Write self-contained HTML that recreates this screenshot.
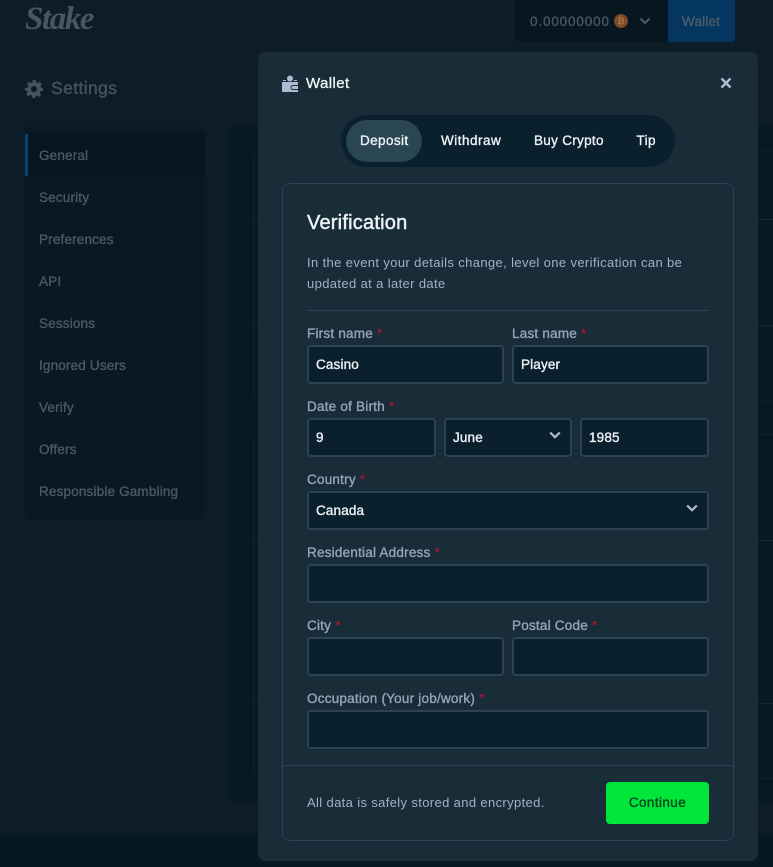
<!DOCTYPE html>
<html><head><meta charset="utf-8"><title>Wallet</title>
<style>
*{box-sizing:border-box}
html,body{margin:0;padding:0}
body{width:773px;height:867px;overflow:hidden;position:relative;background:#0e1c28;font-family:"Liberation Sans",sans-serif}
.a{position:absolute}
.t{position:absolute;white-space:nowrap;font-size:13.5px;line-height:16px;-webkit-text-stroke:.35px currentColor}
.nav{color:#4c5866;left:39px;letter-spacing:.17px}
.lbl{color:#95a5bb;left:307px;letter-spacing:.22px}
.lbl b{color:#c8102e;font-weight:400;-webkit-text-stroke:0;letter-spacing:0}
.in{position:absolute;background:#0a212d;border:2px solid #2b4453;border-radius:4px;height:39px;color:#eef2f6;font-size:13.5px;line-height:35px;padding-left:7px;letter-spacing:.15px;-webkit-text-stroke:.35px currentColor}
.ln{position:absolute;height:1px;background:#172735}
.tab{position:absolute;top:133px;color:#eef2f6;font-size:13.5px;line-height:16px;white-space:nowrap;letter-spacing:.4px;-webkit-text-stroke:.35px currentColor}
</style></head><body>

<!-- dimmed page -->
<div class="a" style="left:0;top:835px;width:773px;height:32px;background:#071825"></div>
<div class="t" style="left:25px;top:-1px;font:italic bold 33px/40px 'Liberation Serif',serif;color:#4a5561;letter-spacing:-1.4px;-webkit-text-stroke:0">Stake</div>
<div class="a" style="left:515px;top:0;width:153px;height:42px;background:#07161f;border-radius:0 0 0 4px"></div>
<div class="a" style="left:668px;top:0;width:67px;height:42px;background:#05365f;border-radius:0 0 4px 0"></div>
<div class="t" style="left:530px;top:14px;color:#4c5866;letter-spacing:.85px">0.00000000</div>
<div class="a" style="left:614px;top:14px;width:14px;height:14px;border-radius:50%;background:#7b4a27;color:#a87345;font:bold 9px/14px 'Liberation Sans',sans-serif;text-align:center">₿</div>
<svg class="a" style="left:639px;top:17px" width="12" height="9" viewBox="0 0 12 9"><path d="M1.5 1.5 6 6l4.5-4.500" fill="none" stroke="#4c5866" stroke-width="2.2"/></svg>
<div class="t" style="left:682px;top:14px;color:#4f5d6c;letter-spacing:.2px">Wallet</div>

<svg class="a" style="left:25px;top:80px" width="18" height="18" viewBox="0 0 24 24"><path fill="#47525f" fill-rule="evenodd" d="M10 0h4l.7 3.4 2 .8L19.600 2.300l2.800 2.800-1.900 2.900.8 2L24 10.700v3.600l-3.600.7-.8 2 1.900 2.900-2.800 2.800-2.900-1.900-2 .8L14 24h-4l-.7-3.400-2-.8-2.900 1.900-2.800-2.800 1.900-2.900-.8-2L0 14.300v-3.600l3.700-.7.8-2-1.900-2.900 2.800-2.800 2.900 1.900 2-.8zM12 8a4 4 0 1 0 0 8 4 4 0 0 0 0-8z"/></svg>
<div class="t" style="left:51px;top:78px;font-size:17.5px;line-height:20px;color:#47525f;letter-spacing:.4px;-webkit-text-stroke:.4px currentColor">Settings</div>

<div class="a" style="left:25px;top:127px;width:180px;height:393px;background:#0a1824;border-radius:8px"></div>
<div class="a" style="left:25px;top:134px;width:180px;height:42px;background:#061520"></div>
<div class="a" style="left:25px;top:134px;width:3px;height:42px;background:#05447a"></div>
<div class="t nav" style="top:148px">General</div>
<div class="t nav" style="top:190px">Security</div>
<div class="t nav" style="top:232px">Preferences</div>
<div class="t nav" style="top:274px">API</div>
<div class="t nav" style="top:316px">Sessions</div>
<div class="t nav" style="top:358px">Ignored Users</div>
<div class="t nav" style="top:400px">Verify</div>
<div class="t nav" style="top:442px">Offers</div>
<div class="t nav" style="top:484px">Responsible Gambling</div>

<div class="a" style="left:229px;top:126px;width:544px;height:676px;background:#081926;border-radius:8px 0 0 8px"></div>
<div class="a" style="left:253px;top:150px;width:520px;height:252px;border:1px solid #122231;border-right:0;border-radius:8px 0 0 8px"></div>
<div class="a" style="left:253px;top:434px;width:520px;height:345px;border:1px solid #122231;border-right:0;border-radius:8px 0 0 8px"></div>
<div class="ln" style="left:253px;top:219px;width:520px"></div>
<div class="ln" style="left:253px;top:325px;width:520px"></div>
<div class="ln" style="left:253px;top:540px;width:520px"></div>
<div class="ln" style="left:253px;top:703px;width:520px"></div>

<!-- modal -->
<div class="a" style="left:258px;top:52px;width:500px;height:809px;background:#182d38;border-radius:8px"></div>
<svg class="a" style="left:282px;top:75px" width="17" height="17" viewBox="0 0 17 17"><circle cx="8" cy="3.500" r="3" fill="#b1bad3"/><path fill="#b1bad3" fill-rule="evenodd" d="M1 5h3v1H1zM12 5h3v1h-3zM0 7h16v3h-5a2.500 2.500 0 0 0 0 5h5v2H1a1 1 0 0 1-1-1zM11 11h5v3h-5a1.500 1.500 0 0 1 0-3z"/></svg>
<div class="t" style="left:306px;top:76px;font-size:15px;color:#eef2f6;letter-spacing:.4px">Wallet</div>
<svg class="a" style="left:720px;top:77px" width="12" height="12" viewBox="0 0 12 12"><path d="M1.500 1.500l9 9M10.500 1.500l-9 9" stroke="#b1bad3" stroke-width="2.400"/></svg>

<div class="a" style="left:341px;top:115px;width:334px;height:52px;background:#0a212d;border-radius:26px"></div>
<div class="a" style="left:346px;top:120px;width:76px;height:42px;background:#2b4653;border-radius:21px"></div>
<div class="tab" style="left:360px">Deposit</div>
<div class="tab" style="left:441px;letter-spacing:.5px">Withdraw</div>
<div class="tab" style="left:534px;letter-spacing:.3px">Buy Crypto</div>
<div class="tab" style="left:636.500px">Tip</div>

<div class="a" style="left:282px;top:183px;width:452px;height:658px;border:1px solid #2b4453;border-radius:8px"></div>
<div class="t" style="left:307px;top:211px;font-size:20px;line-height:24px;color:#eef2f6;letter-spacing:.22px;-webkit-text-stroke:.45px currentColor">Verification</div>
<div class="t" style="left:307px;top:252px;font-size:13px;color:#a3b1c4;line-height:21px;-webkit-text-stroke:0;letter-spacing:.37px;white-space:normal;width:400px">In the event your details change, level one verification can be<br>updated at a later date</div>
<div class="a" style="left:307px;top:310px;width:402px;height:1px;background:#2b4453"></div>

<div class="t lbl" style="top:326px">First name <b>*</b></div>
<div class="t lbl" style="top:326px;left:512px">Last name <b>*</b></div>
<div class="in" style="left:307px;top:345px;width:197px">Casino</div>
<div class="in" style="left:512px;top:345px;width:197px">Player</div>

<div class="t lbl" style="top:399px">Date of Birth <b>*</b></div>
<div class="in" style="left:307px;top:418px;width:129px">9</div>
<div class="in" style="left:444px;top:418px;width:128px">June</div>
<svg class="a" style="left:549px;top:431px" width="12" height="9" viewBox="0 0 12 9"><path d="M1.200 1.500 6 6.200l4.800-4.700" fill="none" stroke="#b1bad3" stroke-width="2.200"/></svg>
<div class="in" style="left:580px;top:418px;width:129px">1985</div>

<div class="t lbl" style="top:472px">Country <b>*</b></div>
<div class="in" style="left:307px;top:491px;width:402px">Canada</div>
<svg class="a" style="left:686px;top:504px" width="12" height="9" viewBox="0 0 12 9"><path d="M1.200 1.500 6 6.200l4.800-4.700" fill="none" stroke="#b1bad3" stroke-width="2.200"/></svg>

<div class="t lbl" style="top:545px">Residential Address <b>*</b></div>
<div class="in" style="left:307px;top:564px;width:402px"></div>

<div class="t lbl" style="top:618px">City <b>*</b></div>
<div class="t lbl" style="top:618px;left:512px">Postal Code <b>*</b></div>
<div class="in" style="left:307px;top:637px;width:197px"></div>
<div class="in" style="left:512px;top:637px;width:197px"></div>

<div class="t lbl" style="top:691px">Occupation (Your job/work) <b>*</b></div>
<div class="in" style="left:307px;top:710px;width:402px"></div>

<div class="a" style="left:283px;top:765px;width:450px;height:1px;background:#2b4453"></div>
<div class="t" style="left:307px;top:795px;font-size:13px;color:#a3b1c4;-webkit-text-stroke:0;letter-spacing:.36px">All data is safely stored and encrypted.</div>
<div class="a" style="left:606px;top:782px;width:103px;height:42px;background:#00e63a;border-radius:4px;color:#06431f;font-size:13.5px;line-height:42px;text-align:center;letter-spacing:.4px;-webkit-text-stroke:.35px currentColor">Continue</div>
</body></html>
